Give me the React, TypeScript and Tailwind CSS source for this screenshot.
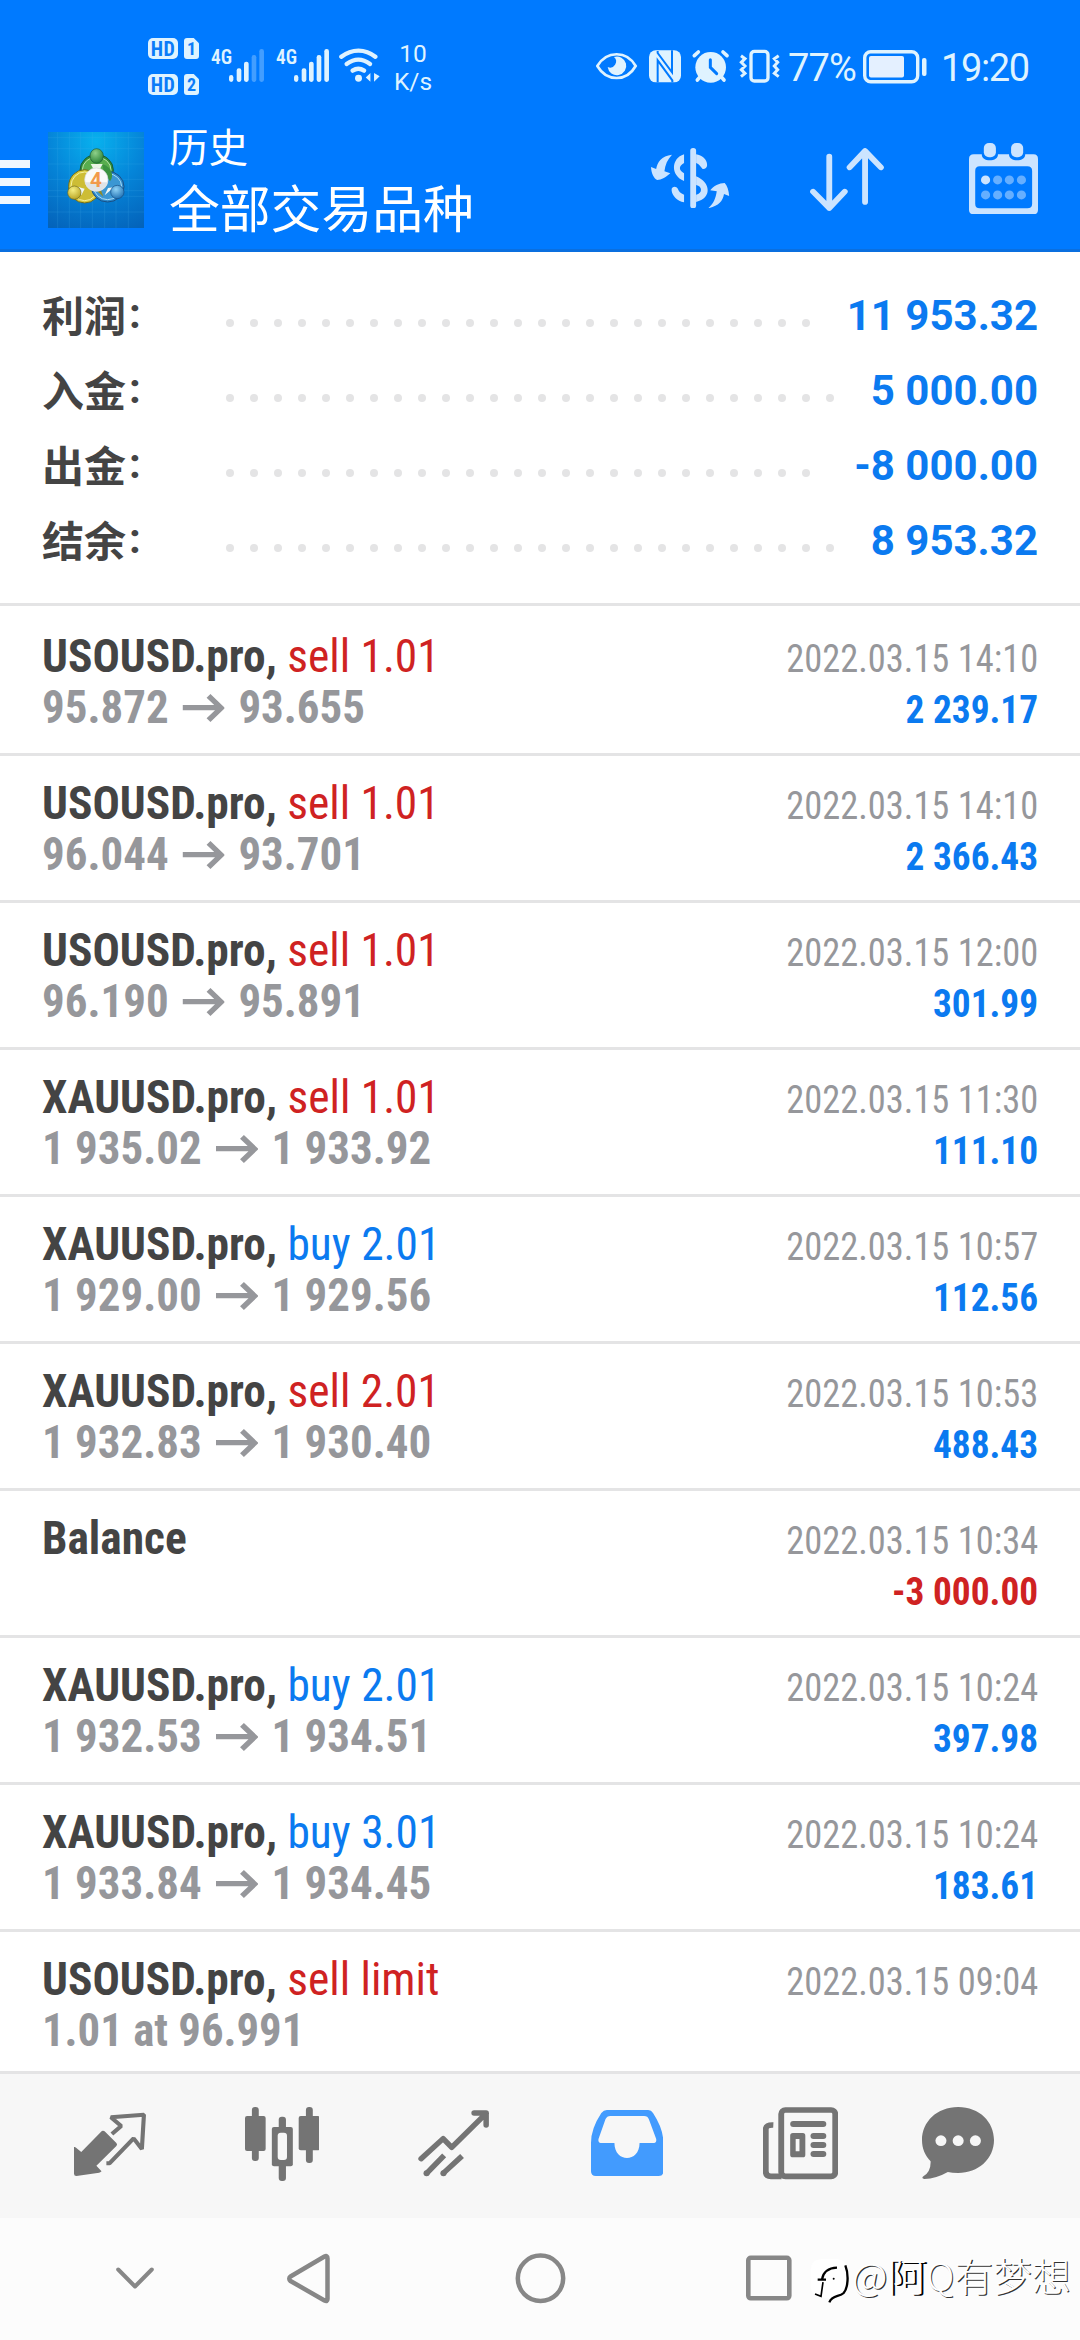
import type { ReactNode } from "react";

type Trade = {
  symbol: string;
  action?: string;
  side?: "buy" | "sell";
  open?: string;
  close?: string;
  note?: string;
  time: string;
  value?: string;
};

const summary = [
  { label: "利润", value: "11 953.32", dots: 25 },
  { label: "入金", value: "5 000.00", dots: 26 },
  { label: "出金", value: "-8 000.00", dots: 25 },
  { label: "结余", value: "8 953.32", dots: 26 },
];

const trades: Trade[] = [
  { symbol: "USOUSD.pro,", action: "sell 1.01", side: "sell", open: "95.872", close: "93.655", time: "2022.03.15 14:10", value: "2 239.17" },
  { symbol: "USOUSD.pro,", action: "sell 1.01", side: "sell", open: "96.044", close: "93.701", time: "2022.03.15 14:10", value: "2 366.43" },
  { symbol: "USOUSD.pro,", action: "sell 1.01", side: "sell", open: "96.190", close: "95.891", time: "2022.03.15 12:00", value: "301.99" },
  { symbol: "XAUUSD.pro,", action: "sell 1.01", side: "sell", open: "1 935.02", close: "1 933.92", time: "2022.03.15 11:30", value: "111.10" },
  { symbol: "XAUUSD.pro,", action: "buy 2.01", side: "buy", open: "1 929.00", close: "1 929.56", time: "2022.03.15 10:57", value: "112.56" },
  { symbol: "XAUUSD.pro,", action: "sell 2.01", side: "sell", open: "1 932.83", close: "1 930.40", time: "2022.03.15 10:53", value: "488.43" },
  { symbol: "Balance", time: "2022.03.15 10:34", value: "-3 000.00" },
  { symbol: "XAUUSD.pro,", action: "buy 2.01", side: "buy", open: "1 932.53", close: "1 934.51", time: "2022.03.15 10:24", value: "397.98" },
  { symbol: "XAUUSD.pro,", action: "buy 3.01", side: "buy", open: "1 933.84", close: "1 934.45", time: "2022.03.15 10:24", value: "183.61" },
  { symbol: "USOUSD.pro,", action: "sell limit", side: "sell", note: "1.01 at 96.991", time: "2022.03.15 09:04" },
];

function HdBadge({ sim }: { sim: string }) {
  return (
    <div className="flex items-center gap-[6px] font-['Roboto_Condensed'] font-bold text-[#0b7cf8]">
      <span className="flex h-[21px] w-[30px] items-center justify-center rounded-[5px] bg-[#dff3ff] text-[20px] leading-none tracking-[0.5px]">
        HD
      </span>
      <span className="flex h-[21px] w-[15px] items-center justify-center rounded-[3px] bg-[#dff3ff] text-[18px] leading-none [clip-path:polygon(0_0,65%_0,100%_25%,100%_100%,0_100%)]">
        {sim}
      </span>
    </div>
  );
}

function Signal({ level }: { level: number }) {
  const bars = [
    [267, 135, 13],
    [290, 115, 14],
    [312, 95, 14],
    [335, 75, 14],
    [358, 57, 14],
  ];
  return (
    <div className="flex h-[34px] items-start">
      <span className="w-[18px] origin-left scale-x-[0.92] font-['Roboto_Condensed'] text-[21px] leading-[17px] font-semibold">4G</span>
      <svg viewBox="267 57 105 100" className="h-[33.3px] w-[35px]">
        {bars.map(([x, y, w], i) => (
          <rect key={x} x={x} y={y} width={w} height={156 - y} rx="6.5" fill="#dff3ff" opacity={i < level ? 1 : 0.3} />
        ))}
      </svg>
    </div>
  );
}

function StatusBar() {
  return (
    <div className="flex h-[112px] text-[#dff3ff]">
      <div className="ml-[148px] mt-[38px] flex flex-col gap-[15px]">
        <HdBadge sim="1" />
        <HdBadge sim="2" />
      </div>
      <div className="ml-3 mt-[49px] flex gap-3">
        <Signal level={3} />
        <Signal level={5} />
      </div>
      <svg viewBox="597 55 124 105" className="ml-[10px] mt-[48px] h-[35px] w-[41px]" fill="none" stroke="#dff3ff">
        <g strokeWidth="13" strokeLinecap="round">
          <path d="M604 81C636 56 676 56 707 81" />
          <path d="M620 103C643 86 668 86 691 103" />
          <path d="M638 123C650 115 661 115 673 123" />
        </g>
        <circle cx="656" cy="146" r="10.5" fill="#dff3ff" stroke="none" />
        <path d="M678 144L692 130V157ZM703 130L720 140L703 157Z" fill="#dff3ff" stroke="none" />
      </svg>
      <div className="ml-[11px] mt-[40px] w-[44px] text-center font-['Roboto'] text-[24.5px] leading-[28px]">
        <div>10</div>
        <div>K/s</div>
      </div>
      <svg viewBox="18 28 555 104" className="ml-[161px] mt-[49.3px] h-[34.7px] w-[185px]" fill="none" stroke="#dff3ff">
        <path d="M22 79C50 32 110 32 137 79C110 127 50 127 22 79Z" strokeWidth="8" />
        <path d="M72 52A28 28 0 1 1 53 82A18 18 0 0 0 72 52Z" fill="#dff3ff" stroke="none" />
        <rect x="177" y="32" width="96" height="96" rx="20" fill="#dff3ff" stroke="none" />
        <path d="M203 128V62L247 122V128M246 32V98L203 40V34" stroke="#007aff" strokeWidth="6" />
        <circle cx="362" cy="83" r="46" fill="#dff3ff" stroke="none" />
        <path d="M361 60V83L380 102" stroke="#007aff" strokeWidth="9" strokeLinecap="round" />
        <path d="M313 48L325 37M411 48L399 37M322 121L328 114M402 121L396 114" strokeWidth="11" strokeLinecap="round" />
        <rect x="483" y="35" width="51" height="89" rx="10" strokeWidth="10" />
        <path d="M453 48L465 57L454 68L465 79L454 90L465 101L453 111M566 48L553 57L563 68L553 79L563 90L553 101L566 111" strokeWidth="9" />
      </svg>
      <span className="ml-[7px] mt-[46px] w-[72px] font-['Roboto'] text-[38px] leading-[45px] tracking-[-0.8px]">77%</span>
      <svg viewBox="0 0 64 34" className="ml-[3px] mt-[50px] h-[34px] w-[64px]" fill="none" stroke="#dff3ff">
        <rect x="1.7" y="1.7" width="53" height="30" rx="6" strokeWidth="3.4" />
        <rect x="6" y="6" width="35" height="21.5" rx="2" fill="#e4f0ff" stroke="none" />
        <rect x="59" y="8" width="4.5" height="18" rx="2" fill="#dff3ff" stroke="none" />
      </svg>
      <span className="ml-[14px] mt-[46px] font-['Roboto'] text-[38px] leading-[45px] tracking-[-1.4px]">19:20</span>
    </div>
  );
}

function Logo() {
  return (
    <svg viewBox="24 12 288 288" className="h-24 w-24">
      <defs>
        <radialGradient id="sky" cx="0.5" cy="0.1" r="1">
          <stop offset="0" stopColor="#08b1ee" />
          <stop offset="0.5" stopColor="#0584d8" />
          <stop offset="1" stopColor="#0463ba" />
        </radialGradient>
        <radialGradient id="green" cx="0.4" cy="0.3" r="0.8">
          <stop offset="0" stopColor="#8fd08a" />
          <stop offset="1" stopColor="#1f7a2c" />
        </radialGradient>
        <radialGradient id="gold" cx="0.4" cy="0.3" r="0.8">
          <stop offset="0" stopColor="#f5ee82" />
          <stop offset="1" stopColor="#b19c1a" />
        </radialGradient>
        <radialGradient id="azure" cx="0.4" cy="0.3" r="0.8">
          <stop offset="0" stopColor="#8fd2f6" />
          <stop offset="1" stopColor="#1668ad" />
        </radialGradient>
      </defs>
      <rect x="24" y="12" width="288" height="288" fill="url(#sky)" />
      <path d="M53 12V300M88 12V300M122 12V300M157 12V300M194 12V300M228 12V300M265 12V300M24 29H312M24 62H312M24 108H312M24 154H312M24 188H312M24 205H312M24 252H312" stroke="#4db6ee" strokeWidth="1.5" opacity="0.35" />
      <ellipse cx="170" cy="126" rx="50" ry="46" fill="#2f8f3a" stroke="#1d5b35" strokeWidth="3" />
      <ellipse cx="170" cy="126" rx="43" ry="39" fill="#58ad4e" stroke="#b9e2a8" strokeWidth="3" />
      <ellipse cx="134" cy="175" rx="48" ry="50" fill="#d8cb3b" stroke="#6f6a1c" strokeWidth="3" />
      <ellipse cx="134" cy="175" rx="41" ry="43" fill="#cdbd35" stroke="#f6f0a0" strokeWidth="3" />
      <ellipse cx="203" cy="176" rx="49" ry="46" fill="#2f8acb" stroke="#174f86" strokeWidth="3" />
      <ellipse cx="203" cy="176" rx="42" ry="39" fill="#3b97d3" stroke="#a9dcf7" strokeWidth="3" />
      <path d="M186 108C214 116 224 142 210 160L194 138Z" fill="#3c9340" />
      <path d="M112 176L134 182L124 202ZM194 202L204 180L222 178Z" fill="#eef6f4" />
      <path d="M152 108H188L180 122H160Z" fill="#eaf5e6" />
      <path d="M172 190L190 206L182 184Z" fill="#8d8a2c" />
      <ellipse cx="170" cy="84" rx="20" ry="22" fill="url(#green)" stroke="#1d5b35" strokeWidth="2" />
      <circle cx="103" cy="194" r="20" fill="url(#gold)" stroke="#6f6a1c" strokeWidth="2" />
      <circle cx="232" cy="192" r="20" fill="url(#azure)" stroke="#174f86" strokeWidth="2" />
      <circle cx="169" cy="155" r="35" fill="#fafafa" stroke="#d5dadd" strokeWidth="2" />
      <path d="M135 163A35 35 0 0 0 203 163Z" fill="#dfe3e6" />
      <text x="168" y="177" textAnchor="middle" fontFamily="Roboto" fontWeight="700" fontSize="62" fill="#f29a4a">4</text>
    </svg>
  );
}

function AppBar() {
  return (
    <div className="flex h-[137px] items-start">
      <div className="mt-[48px] flex w-[30px] flex-col gap-[10px]">
        <span className="h-2 bg-[#f0f7ff]" />
        <span className="h-2 bg-[#f0f7ff]" />
        <span className="h-2 bg-[#f0f7ff]" />
      </div>
      <div className="ml-[18px] mt-5">
        <Logo />
      </div>
      <div className="ml-[25px] mt-[9px] w-[482px] font-['Roboto','Noto_Sans_CJK_SC',sans-serif] text-white">
        <div className="text-[39.5px] leading-[56px]">历史</div>
        <div className="text-[50.8px] leading-[67px]">全部交易品种</div>
      </div>
      <svg viewBox="322 444 228 181" preserveAspectRatio="none" className="mt-[36px] h-[60.3px] w-[78.5px]" fill="#cce4ff">
        <rect x="436" y="444" width="17" height="181" rx="8" />
        <path d="M418 463C380 475 378 527 418 543V520C402 510 402 498 418 489Z" />
        <path d="M382 566C385 558 396 558 400 566C402 574 408 580 418 584V607C398 602 384 588 382 572Z" />
        <path d="M453 463C470 465 485 478 485 495C485 504 478 508 472 507C466 500 462 492 453 489Z" />
        <path fillRule="evenodd" d="M453 529C496 547 500 595 453 606ZM453 555V584C472 581 472 558 453 555Z" />
        <path d="M383 464C352 468 341 485 337 507L322 501C323 520 330 535 340 540C352 540 367 531 378 520L361 514C363 494 370 478 383 464Z" />
        <path d="M488 625C503 612 510 596 513 574L494 571C504 558 520 549 536 549C543 557 548 571 549 588L534 582C531 604 517 618 488 625Z" />
      </svg>
      <svg viewBox="781 444 215 190" preserveAspectRatio="none" className="ml-[80px] mt-[36px] h-[63.3px] w-[74px]" fill="none" stroke="#cce4ff" strokeWidth="17" strokeLinecap="round" strokeLinejoin="round">
        <path d="M837 470V624M790 575L837 624L882 575M941 606V453M896 502L941 453L987 502" />
      </svg>
      <svg viewBox="1243 428 200 214" preserveAspectRatio="none" className="ml-[85px] mt-[31px] h-[71.3px] w-[69px]">
        <path fillRule="evenodd" d="M1257 462H1280C1280 474 1290 480 1303 480C1317 480 1327 474 1327 462H1359C1359 474 1370 480 1382 480C1396 480 1406 474 1406 462H1430Q1443 462 1443 476V628Q1443 642 1430 642H1257Q1243 642 1243 628V476Q1243 462 1257 462ZM1274 498Q1261 498 1261 512V610Q1261 624 1274 624H1412Q1426 624 1426 610V512Q1426 498 1412 498Z" fill="#cce4ff" />
        <rect x="1286" y="428" width="35" height="43" rx="15" fill="#cce4ff" />
        <rect x="1365" y="428" width="35" height="43" rx="15" fill="#cce4ff" />
        {[539, 584].map((y) =>
          [1291, 1326, 1360, 1395].map((x) => (
            <circle key={`${x}-${y}`} cx={x} cy={y} r="13.3" fill={x === 1291 && y === 539 ? "#cce4ff" : "#66afff"} />
          )),
        )}
      </svg>
    </div>
  );
}

function Summary() {
  return (
    <section className="flex h-[354px] flex-col border-b-[3px] border-[#e4e4e5] pt-[26px] pr-[42px] pl-[42px]">
      {summary.map((s) => (
        <div key={s.label} className="flex h-[75px] items-center">
          <span className="mb-[3px] flex w-[184px] text-[42px] leading-[60px] font-bold text-[#444]">
            <span className="font-['Noto_Sans_CJK_SC',sans-serif]">{s.label}</span>
            <span className="ml-[3px] font-['Roboto']">:</span>
          </span>
          <span className="mt-[14px] flex gap-4">
            {Array.from({ length: s.dots }, (_, i) => (
              <span key={i} className="size-2 rounded-full bg-[#e4e4e5]" />
            ))}
          </span>
          <span className="ml-auto font-['Roboto'] text-[42px] leading-[60px] font-bold text-[#0b7af0]">{s.value}</span>
        </div>
      ))}
    </section>
  );
}

function Arrow() {
  return (
    <svg viewBox="528 1300 123 86" preserveAspectRatio="none" className="mx-[14.5px] mt-[3px] h-[28px] w-[44px]" fill="none" stroke="#96979b" strokeWidth="16">
      <path d="M528 1342H642M604 1306L641 1343L604 1380" />
    </svg>
  );
}

function TradeRow({ trade, className }: { trade: Trade; className: string }) {
  const negative = trade.value?.startsWith("-");
  return (
    <li className={`flex justify-between border-b-[3px] border-[#e4e4e5] pr-[42px] pl-[42px] font-['Roboto_Condensed'] ${className}`}>
      <div className="mt-[21px] text-[47px] leading-[51px] whitespace-nowrap">
        <div className="origin-left scale-x-[0.966]">
          <span className="font-bold text-[#444]">{trade.symbol}</span>{" "}
          <span className={trade.side === "buy" ? "text-[#0b7af0]" : "text-[#cf2222]"}>{trade.action}</span>
        </div>
        {trade.open && (
          <div className="flex h-[51px] origin-left scale-x-[0.956] items-center font-bold text-[#96979b]">
            <span>{trade.open}</span>
            <Arrow />
            <span>{trade.close}</span>
          </div>
        )}
        {trade.note && <div className="origin-left scale-x-[0.952] font-bold text-[#96979b]">{trade.note}</div>}
      </div>
      <div className="mt-[24px] text-right text-[39.5px] leading-[51px]">
        <div className="origin-right scale-x-[0.922] text-[#96979b]">{trade.time}</div>
        {trade.value && (
          <div className={`origin-right scale-x-[0.945] font-bold ${negative ? "text-[#cf2222]" : "text-[#0b7af0]"}`}>{trade.value}</div>
        )}
      </div>
    </li>
  );
}

function Tab({ box, width, cell, children }: { box: string; width: string; cell: string; children: ReactNode }) {
  return (
    <div className={`flex justify-center ${cell}`}>
      <svg viewBox={box} preserveAspectRatio="none" className={`h-[76.7px] ${width}`}>
        {children}
      </svg>
    </div>
  );
}

function TabBar() {
  return (
    <nav className="flex h-[144px] bg-[#f7f7f7] pt-[31px] pl-6">
      <Tab box="215 135 209 230" width="w-[72px]" cell="w-[172px]">
        <path d="M299 212Q303 212 306 216L338 249Q342 253 338 258L280 317L295 334Q293 337 288 338L222 348Q215 348 215 341V261Q218 260 221 263L236 276L293 216Q296 212 299 212Z" fill="#747474" />
        <path d="M325 222L352 198L322 172L418 164L412 267L388 235L318 310H309" fill="none" stroke="#747474" strokeWidth="12" strokeLinejoin="bevel" />
      </Tab>
      <Tab box="709 135 217 230" width="w-[74.7px]" cell="w-[172px]">
        <g fill="#747474">
          <rect x="729" y="141" width="20" height="162" rx="9" />
          <rect x="709" y="168" width="60" height="105" rx="6" />
          <rect x="886" y="141" width="20" height="168" rx="9" />
          <rect x="865" y="168" width="61" height="103" rx="6" />
          <rect x="807" y="170" width="21" height="50" rx="9" />
          <rect x="807" y="300" width="21" height="63" rx="9" />
          <rect x="787" y="201" width="61" height="118" rx="6" />
        </g>
        <rect x="804" y="218" width="27" height="82" rx="9" fill="#f7f7f7" />
      </Tab>
      <Tab box="1213 135 208 230" width="w-[71.6px]" cell="w-[172px]">
        <g fill="none" stroke="#747474" strokeWidth="16" strokeLinejoin="round">
          <path d="M1222 296L1286 236L1311 262L1411 160M1376 159H1411V195" strokeLinecap="round" />
          <path d="M1238 340L1289 286M1286 340L1341 288" />
        </g>
        <circle cx="1238" cy="340" r="9" fill="#747474" />
        <circle cx="1287" cy="340" r="9" fill="#747474" />
      </Tab>
      <Tab box="146 135 211 230" width="w-[72.7px]" cell="w-[174px]">
        <path fillRule="evenodd" d="M192 150H312Q321 150 326 159Q356 206 356 248V334Q356 348 342 348H160Q146 348 146 334V248Q146 206 176 159Q183 150 192 150ZM202 168Q192 168 188 178L168 236Q165 249 178 249H214C214 309 287 309 287 249H325Q338 249 335 236L314 178Q311 168 300 168Z" fill="#429bfe" />
      </Tab>
      <Tab box="646 135 218 230" width="w-[75px]" cell="w-[172px]">
        <g fill="none" stroke="#747474">
          <rect x="699" y="150" width="157" height="199" rx="12" strokeWidth="17" />
          <path d="M676 195Q654 194 654 208V334Q654 349 669 349H700" strokeWidth="17" />
        </g>
        <g fill="#747474">
          <rect x="725" y="183" width="105" height="18" rx="9" />
          <path fillRule="evenodd" d="M733 219H762Q769 219 769 227V284Q769 292 762 292H733Q725 292 725 284V227Q725 219 733 219ZM741 237V274H752V237Z" />
          <rect x="784" y="219" width="46" height="18" rx="9" />
          <rect x="784" y="246" width="46" height="18" rx="9" />
          <rect x="784" y="273" width="46" height="18" rx="9" />
        </g>
      </Tab>
      <Tab box="1109 135 209 230" width="w-[72px]" cell="w-[144px]">
        <path d="M1214 141C1276 141 1318 186 1318 240C1318 297 1272 339 1214 339Q1196 339 1184 336Q1150 356 1116 357Q1106 355 1113 349Q1135 335 1134 304C1118 286 1109 266 1109 240C1109 186 1152 141 1214 141Z" fill="#747474" />
        <circle cx="1164" cy="242" r="16" fill="#f7f7f7" />
        <circle cx="1214" cy="242" r="16" fill="#f7f7f7" />
        <circle cx="1264" cy="242" r="16" fill="#f7f7f7" />
      </Tab>
    </nav>
  );
}

function SystemNav() {
  return (
    <footer className="flex h-[122px] items-start bg-[#fcfcfc] pt-[33px]">
      <svg viewBox="0 0 38 54" className="ml-[116px] h-[54px] w-[38px]" fill="none" stroke="#878787" strokeWidth="4" strokeLinecap="round" strokeLinejoin="round">
        <path d="M2.2 18.5L19 35.5L35.8 18.5" />
      </svg>
      <svg viewBox="0 0 44 54" className="ml-[133px] h-[54px] w-[44px]" fill="none" stroke="#878787" strokeWidth="4.5" strokeLinejoin="round">
        <path d="M37.5 5.5Q40.5 4 40.5 7.5V48Q40.5 51 37.5 49.5L3.5 30Q1 27.7 3.5 25.5Z" />
      </svg>
      <svg viewBox="0 0 52 54" className="ml-[184px] h-[54px] w-[52px]" fill="none" stroke="#878787" strokeWidth="4.5">
        <circle cx="25.5" cy="27.3" r="22.7" />
      </svg>
      <svg viewBox="0 0 46 54" className="ml-[179px] h-[54px] w-[46px]" fill="none" stroke="#878787" strokeWidth="4.6">
        <rect x="2.3" y="6.8" width="41" height="40.5" rx="2.5" />
      </svg>
      <svg viewBox="30 40 120 140" className="ml-[18px] mt-[7px] h-[46.7px] w-[40px]">
        <path d="M62 44H115Q143 46 144 90C145 145 125 150 110 155L92 170L88 160Q35 160 32 130V75Q34 44 62 44Z" fill="#fff" />
        <g fill="none" stroke="#000">
          <path d="M53 105H78M66 104C70 82 82 70 111 69" strokeWidth="7" />
          <path d="M69 112L63 155L45 148" strokeWidth="5" />
          <path d="M136 62C147 90 144 130 131 145C118 158 97 150 88 173" strokeWidth="7" />
        </g>
        <circle cx="101" cy="102" r="3" />
      </svg>
      <span className="ml-[2px] font-['Noto_Sans_CJK_SC',sans-serif] text-[38.8px] leading-[46px] font-light whitespace-nowrap text-white [text-shadow:1.2px_1.2px_0.5px_#333]">
        @<span className="text-white [text-shadow:2.5px_1px_0_#000]">阿</span>Q有梦想
      </span>
    </footer>
  );
}

export default function App() {
  return (
    <div className="flex h-[2340px] w-[1080px] flex-col overflow-hidden bg-white">
      <header className="h-[252px] border-b-[3px] border-[#0a6fdf] bg-[#007aff]">
        <StatusBar />
        <AppBar />
      </header>
      <Summary />
      <ul className="flex flex-col">
        {trades.map((t, i) => (
          <TradeRow key={i} trade={t} className={i === 0 ? "h-[150px] pt-[3px]" : i === trades.length - 1 ? "h-[142px]" : "h-[147px]"} />
        ))}
      </ul>
      <TabBar />
      <SystemNav />
    </div>
  );
}
